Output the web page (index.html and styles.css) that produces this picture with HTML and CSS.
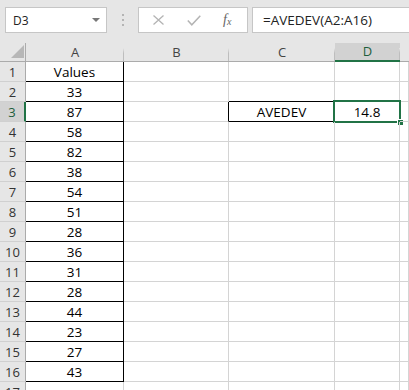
FILE: index.html
```html
<!DOCTYPE html>
<html>
<head>
<meta charset="utf-8">
<link rel="stylesheet" href="styles.css">
</head>
<body>
<div class="toolbar">
  <div class="namebox"><span class="name">D3</span><span class="caret"></span></div>
  <div class="grip"><i></i><i></i><i></i></div>
  <div class="fnbox">
    <svg class="ico-x" width="11" height="10" viewBox="0 0 11 10"><path d="M0.5 0.5 L10.5 9.5 M10.5 0.5 L0.5 9.5" stroke="#b4b4b4" stroke-width="1.3" fill="none"/></svg>
    <svg class="ico-check" width="14" height="11" viewBox="0 0 14 11"><path d="M0.8 5.5 L4.8 9.8 L13.3 0.7" stroke="#b4b4b4" stroke-width="1.5" fill="none"/></svg>
    <span class="fx">f<sub>x</sub></span>
  </div>
  <div class="formula">=AVEDEV(A2:A16)</div>
</div>
<div class="sheet">
  <div class="hdr corner"><span class="tri"></span></div>
  <div class="hdr col">A</div>
  <div class="hdr col">B</div>
  <div class="hdr col">C</div>
  <div class="hdr col sel">D</div>
  <div class="hdr col last"></div>

  <div class="hdr row">1</div><div class="c blk">Values</div><div class="c"></div><div class="c"></div><div class="c"></div><div class="c"></div>
  <div class="hdr row">2</div><div class="c blk">33</div><div class="c"></div><div class="c bb"></div><div class="c"></div><div class="c"></div>
  <div class="hdr row selr">3</div><div class="c blk">87</div><div class="c br"></div><div class="c blk">AVEDEV</div><div class="c active">14.8<span class="selbox"><span class="handle"></span></span></div><div class="c"></div>
  <div class="hdr row">4</div><div class="c blk">58</div><div class="c"></div><div class="c"></div><div class="c"></div><div class="c"></div>
  <div class="hdr row">5</div><div class="c blk">82</div><div class="c"></div><div class="c"></div><div class="c"></div><div class="c"></div>
  <div class="hdr row">6</div><div class="c blk">38</div><div class="c"></div><div class="c"></div><div class="c"></div><div class="c"></div>
  <div class="hdr row">7</div><div class="c blk">54</div><div class="c"></div><div class="c"></div><div class="c"></div><div class="c"></div>
  <div class="hdr row">8</div><div class="c blk">51</div><div class="c"></div><div class="c"></div><div class="c"></div><div class="c"></div>
  <div class="hdr row">9</div><div class="c blk">28</div><div class="c"></div><div class="c"></div><div class="c"></div><div class="c"></div>
  <div class="hdr row">10</div><div class="c blk">36</div><div class="c"></div><div class="c"></div><div class="c"></div><div class="c"></div>
  <div class="hdr row">11</div><div class="c blk">31</div><div class="c"></div><div class="c"></div><div class="c"></div><div class="c"></div>
  <div class="hdr row">12</div><div class="c blk">28</div><div class="c"></div><div class="c"></div><div class="c"></div><div class="c"></div>
  <div class="hdr row">13</div><div class="c blk">44</div><div class="c"></div><div class="c"></div><div class="c"></div><div class="c"></div>
  <div class="hdr row">14</div><div class="c blk">23</div><div class="c"></div><div class="c"></div><div class="c"></div><div class="c"></div>
  <div class="hdr row">15</div><div class="c blk">27</div><div class="c"></div><div class="c"></div><div class="c"></div><div class="c"></div>
  <div class="hdr row">16</div><div class="c blk">43</div><div class="c"></div><div class="c"></div><div class="c"></div><div class="c"></div>
  <div class="hdr row">17</div><div class="c"></div><div class="c"></div><div class="c"></div><div class="c"></div><div class="c"></div>
</div>
</body>
</html>
```

FILE: styles.css
```css
* { box-sizing: border-box; }
html, body { margin: 0; padding: 0; }
body {
  width: 409px;
  height: 390px;
  overflow: hidden;
  background: #e6e6e6;
  font-family: "Open Sans", "Noto Sans", sans-serif;
  color: #000;
}
.toolbar {
  height: 43px;
  display: flex;
  align-items: flex-start;
  padding: 7px 0 0 5px;
}
.namebox {
  width: 102px;
  height: 26px;
  background: #fff;
  border: 1px solid #c6c6c6;
  display: flex;
  align-items: center;
  justify-content: space-between;
  padding: 0 5px 0 7px;
}
.name { font-size: 12px; color: #222; }
.caret {
  width: 0; height: 0;
  border-left: 4px solid transparent;
  border-right: 4px solid transparent;
  border-top: 4px solid #777;
  margin-right: 1px;
}
.grip {
  width: 31px;
  height: 26px;
  display: flex;
  flex-direction: column;
  align-items: center;
  justify-content: center;
  gap: 3px;
}
.grip i { display: block; width: 2px; height: 2px; background: #b4b4b4; }
.fnbox {
  width: 110px;
  height: 26px;
  background: #fff;
  border: 1px solid #c6c6c6;
  display: flex;
  align-items: center;
  padding-left: 14px;
}
.ico-x { margin-right: 23px; }
.ico-check { margin-right: 22px; }
.fx {
  font-family: "Liberation Serif", serif;
  font-style: italic;
  font-size: 14px;
  color: #666;
  line-height: 1;
}
.fx sub { font-size: 10px; vertical-align: -1px; }
.formula {
  flex: 1;
  margin-left: 4px;
  height: 26px;
  background: #fff;
  border: 1px solid #c6c6c6;
  border-right: none;
  font-size: 13.5px;
  line-height: 24px;
  padding-left: 10px;
  color: #222;
}
.sheet {
  display: grid;
  grid-template-columns: 26px 98px 105px 106px 65px 1fr;
  grid-template-rows: 19px repeat(17, 20px);
  background: #fff;
  font-size: 13.5px;
}
.hdr {
  background: #e6e6e6;
  color: #444;
  font-size: 13px;
  display: flex;
  align-items: flex-end;
  justify-content: center;
  line-height: 18px;
}
.corner {
  border-right: 1px solid #ababab;
  border-bottom: 1px solid #ababab;
  justify-content: flex-end;
  padding: 0 1px 3px 0;
}
.tri {
  width: 13px;
  height: 13px;
  background: #b7b7b7;
  clip-path: polygon(100% 0, 100% 100%, 0 100%);
}
.col {
  border-bottom: 1px solid #ababab;
  position: relative;
}
.col::after {
  content: "";
  position: absolute;
  right: 0;
  top: 5px;
  bottom: 0;
  width: 1px;
  background: linear-gradient(#e6e6e6, #bdbdbd 40%);
}
.col.last::after { display: none; }
.col.sel {
  background: #d2d2d2;
  color: #1e5e3c;
  border-bottom: 2px solid #217346;
}
.row {
  border-right: 1px solid #ababab;
  border-bottom: 1px solid #d0d0d0;
  color: #333;
  padding-bottom: 0;
}
.row.selr {
  background: #d2d2d2;
  color: #1e5e3c;
  border-right: 2px solid #217346;
}
.c {
  border-right: 1px solid #d4d4d4;
  border-bottom: 1px solid #d4d4d4;
  display: flex;
  align-items: flex-end;
  justify-content: center;
  line-height: 18px;
  position: relative;
}
.c.blk { border-right-color: #000; border-bottom-color: #000; }
.c.bb { border-bottom-color: #000; }
.c.br { border-right-color: #000; }
.selbox {
  position: absolute;
  left: -2px;
  top: -2px;
  right: -2px;
  bottom: -2px;
  border: 2px solid #217346;
}
.handle {
  position: absolute;
  right: -4px;
  bottom: -4px;
  width: 6px;
  height: 6px;
  background: #217346;
  border: 1px solid #fff;
  border-right: none;
  border-bottom: none;
}
```
